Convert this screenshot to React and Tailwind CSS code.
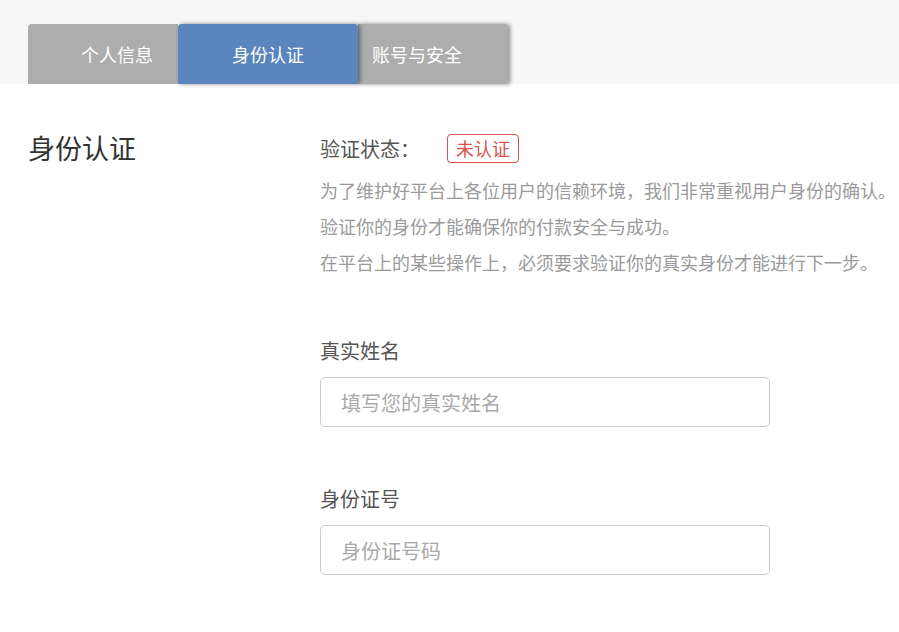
const tabs = [
  { label: '个人信息', cls: 'w-[150px] pl-[53px] bg-[#adadad] rounded-tl-[4px] z-0' },
  { label: '身份认证', cls: 'w-[180px] justify-center bg-[#5b85bd] rounded-t-[4px] z-20 shadow-[2px_0_4px_rgba(0,0,0,0.45)]' },
  { label: '账号与安全', cls: 'w-[150px] pl-[14px] bg-[#adadad] rounded-tr-[4px] z-10 shadow-[2px_0_4px_rgba(0,0,0,0.45)]' },
]

const notes = [
  '为了维护好平台上各位用户的信赖环境，我们非常重视用户身份的确认。',
  '验证你的身份才能确保你的付款安全与成功。',
  '在平台上的某些操作上，必须要求验证你的真实身份才能进行下一步。',
]

function Field({ label, placeholder, top }) {
  return (
    <div className={top}>
      <div className="mb-[11px] text-[20px] leading-[30px] text-[#555]">{label}</div>
      <input
        placeholder={placeholder}
        className="block w-[450px] h-[50px] border border-[#cccccc] rounded-[5px] px-[20px] text-[20px] text-[#555] placeholder:text-[#a9a9a9] outline-none"
      />
    </div>
  )
}

export default function App() {
  return (
    <div
      className="min-h-screen bg-white overflow-hidden"
      style={{ fontFamily: '"Noto Sans CJK SC", "Noto Sans", sans-serif' }}
    >
      <div className="h-[84px] bg-[#f7f7f7] pt-[24px] pl-[28px] flex">
        {tabs.map((t) => (
          <div key={t.label} className={`relative h-[60px] flex items-center text-[18px] text-white ${t.cls}`}>
            {t.label}
          </div>
        ))}
      </div>

      <div className="flex pt-[50px]">
        <div className="w-[320px] shrink-0 pl-[28px]">
          <h2 className="text-[27px] leading-[27px] text-[#333]">身份认证</h2>
        </div>
        <div className="flex-1">
          <div className="flex items-center h-[29px]">
            <span className="text-[20px] text-[#555]">验证状态：</span>
            <span className="ml-[27px] h-[29px] px-[8px] flex items-center border border-[#d9534f] rounded-[4px] text-[18px] text-[#d9534f]">
              未认证
            </span>
          </div>
          <div className="mt-[9px] text-[18px] leading-[36px] text-[#9a9a9a] whitespace-nowrap">
            {notes.map((n) => (
              <p key={n}>{n}</p>
            ))}
          </div>
          <Field label="真实姓名" placeholder="填写您的真实姓名" top="mt-[56px]" />
          <Field label="身份证号" placeholder="身份证号码" top="mt-[57px]" />
        </div>
      </div>
    </div>
  )
}
